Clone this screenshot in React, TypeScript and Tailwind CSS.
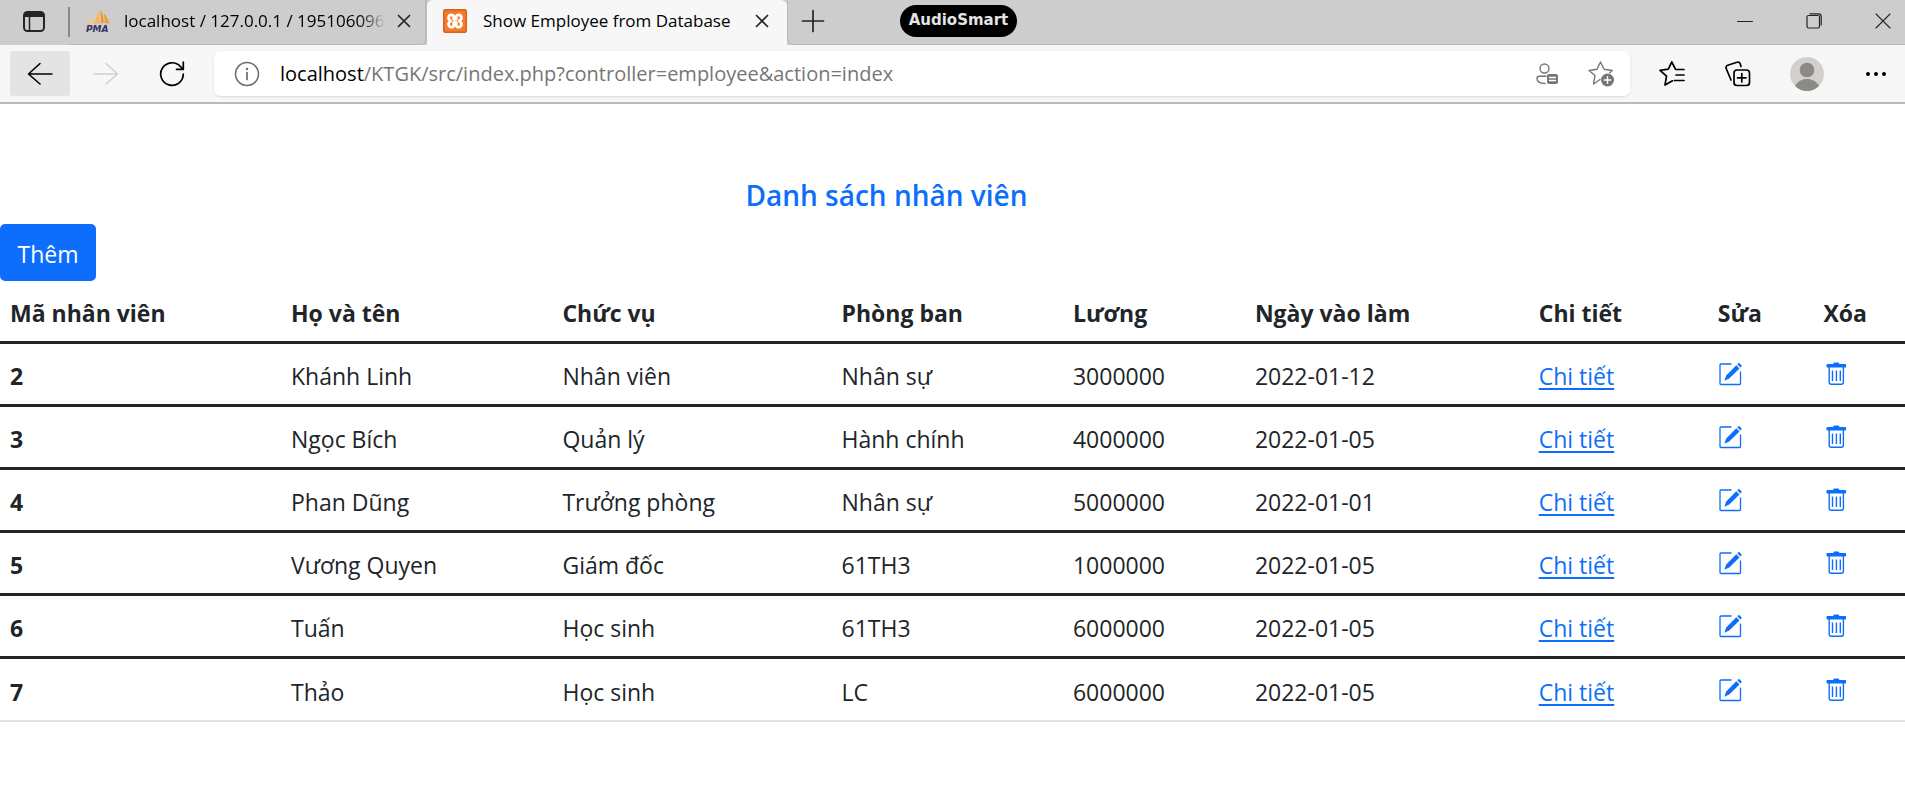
import type { ReactNode } from "react";

type Employee = {
  id: number;
  name: string;
  role: string;
  department: string;
  salary: number;
  startDate: string;
};

const employees: Employee[] = [
  { id: 2, name: "Khánh Linh", role: "Nhân viên", department: "Nhân sự", salary: 3000000, startDate: "2022-01-12" },
  { id: 3, name: "Ngọc Bích", role: "Quản lý", department: "Hành chính", salary: 4000000, startDate: "2022-01-05" },
  { id: 4, name: "Phan Dũng", role: "Trưởng phòng", department: "Nhân sự", salary: 5000000, startDate: "2022-01-01" },
  { id: 5, name: "Vương Quyen", role: "Giám đốc", department: "61TH3", salary: 1000000, startDate: "2022-01-05" },
  { id: 6, name: "Tuấn", role: "Học sinh", department: "61TH3", salary: 6000000, startDate: "2022-01-05" },
  { id: 7, name: "Thảo", role: "Học sinh", department: "LC", salary: 6000000, startDate: "2022-01-05" },
];

const columns = [
  { label: "Mã nhân viên", width: "w-[14.75%]" },
  { label: "Họ và tên", width: "w-[14.25%]" },
  { label: "Chức vụ", width: "w-[14.65%]" },
  { label: "Phòng ban", width: "w-[12.15%]" },
  { label: "Lương", width: "w-[9.55%]" },
  { label: "Ngày vào làm", width: "w-[14.9%]" },
  { label: "Chi tiết", width: "w-[9.4%]" },
  { label: "Sửa", width: "w-[5.55%]" },
  { label: "Xóa", width: "w-[4.8%]" },
];

function Icon({ size = 24, className = "", children }: { size?: number; className?: string; children: ReactNode }) {
  return (
    <svg
      width={size}
      height={size}
      viewBox={`0 0 ${size} ${size}`}
      fill="none"
      stroke="currentColor"
      strokeWidth="1.4"
      strokeLinecap="round"
      strokeLinejoin="round"
      className={`block shrink-0 ${className}`}
      aria-hidden="true"
    >
      {children}
    </svg>
  );
}

function CloseIcon() {
  return (
    <Icon size={14}>
      <path d="M1.5 1.5l11 11M12.5 1.5l-11 11" strokeWidth="1.7" />
    </Icon>
  );
}

function PhpMyAdminIcon() {
  return (
    <svg width="24" height="24" viewBox="0 0 24 24" className="block shrink-0" aria-hidden="true">
      <path d="M6.500 4C6 8 4 12 .8 15.500c2.500-.8 4.200-.9 6.500-.5z" fill="#f9c58a" />
      <path d="M13.500 0C13 2 9.500 10 7.800 15c2-.8 3.700-1 5.700-.8z" fill="#f8b566" />
      <path d="M14 0c1 4 1.200 9 .7 14.200 1-.3 2-.4 3-.3C17.500 8 16.500 4 14 0z" fill="#f7941e" />
      <path d="M17.500 4c3 3 5 6.500 5.800 10.500-1.500-.5-3-.7-4.600-.6 0-3.500-.2-6.500-1.200-9.900z" fill="#f79b2e" />
      <text x="0" y="23" fontSize="9" fontWeight="700" fontStyle="italic" fill="#333366" fontFamily="DejaVu Sans, sans-serif">
        PMA
      </text>
    </svg>
  );
}

function XamppIcon() {
  return (
    <svg width="24" height="24" viewBox="0 0 24 24" className="block shrink-0" aria-hidden="true">
      <rect width="24" height="24" rx="2.500" fill="#d9621e" />
      <rect x="1.500" y="1.500" width="21" height="21" rx="1.500" fill="#f47b2a" />
      <path
        d="M8.300 5.800a2.900 2.900 0 0 0-1.600 5.200l1 1-1 1a2.900 2.900 0 0 0 1.600 5.200c1.500 0 2.400-1 2.400-2.300v-2.400h2.600v2.400c0 1.300.9 2.300 2.400 2.300a2.900 2.900 0 0 0 1.600-5.200l-1-1 1-1a2.900 2.900 0 0 0-1.600-5.200c-1.500 0-2.400 1-2.400 2.300v2.200h-2.600V8.100c0-1.300-.9-2.300-2.400-2.300z"
        fill="#f47b2a"
        stroke="#fff"
        strokeWidth="2.800"
        strokeLinejoin="round"
      />
    </svg>
  );
}

function EditIcon() {
  return (
    <svg width="24" height="24" viewBox="0 0 24 24" className="block" aria-hidden="true">
      <path
        d="M13.500 2H3a1 1 0 0 0-1 1v18.500a1 1 0 0 0 1 1h18.500a1 1 0 0 0 1-1V9.500"
        fill="none"
        stroke="currentColor"
        strokeWidth="1.300"
      />
      <path d="M18.300 3.300l3.200 3.100L11.200 16.600 6.300 18.700l1.900-5.200zM19.300 2.300l1.600-1.500 3 3-1.500 1.600z" fill="currentColor" />
    </svg>
  );
}

function TrashIcon() {
  return (
    <svg width="24" height="24" viewBox="0 0 24 24" className="block" aria-hidden="true">
      <path d="M3.500 2h5.700c.2-1 .8-1.500 1.600-1.500h3c.8 0 1.400.5 1.600 1.500h5.700a1 1 0 0 1 1 1v1.500a1 1 0 0 1-1 1h-17.600a1 1 0 0 1-1-1V3a1 1 0 0 1 1-1z" fill="currentColor" />
      <path d="M5.200 5v15.300a2 2 0 0 0 2 2h10.200a2 2 0 0 0 2-2V5" fill="none" stroke="currentColor" strokeWidth="1.400" />
      <path d="M8.500 8.500v10.500M12.400 8.500v10.500M16.300 8.500v10.500" stroke="currentColor" strokeWidth="1.400" />
    </svg>
  );
}

function TabBar() {
  return (
    <header className="flex h-[45px] items-stretch bg-[#cdcdcd]">
      <button type="button" aria-label="Tab actions" className="ml-[22px] flex items-center pb-[2px]">
        <Icon>
          <rect x="2" y="2" width="20" height="19" rx="3.500" strokeWidth="2" />
          <path d="M2 5.500A3.500 3.500 0 0 1 5.500 2h13A3.500 3.500 0 0 1 22 5.500V7H2z" fill="currentColor" stroke="none" />
          <path d="M7.500 7v14" strokeWidth="1.500" strokeLinecap="butt" />
        </Icon>
      </button>
      <span className="mt-[7px] ml-[22px] h-[30px] w-[2px] bg-[#8a8a8a]" />
      <div className="flex w-[357px] items-center rounded-br-md border-r-2 border-b border-[#bababa] pb-[3px] pl-4">
        <PhpMyAdminIcon />
        <span className="ml-[14px] flex-1 bg-gradient-to-r from-black from-88% to-[#cdcdcd] bg-clip-text text-[17px] whitespace-nowrap text-transparent">
          localhost / 127.0.0.1 / 195106096
        </span>
        <button type="button" aria-label="Close tab" className="mr-4 ml-3">
          <CloseIcon />
        </button>
      </div>
      <div className="flex w-[360px] items-center rounded-t-md bg-[#f7f7f7] pb-[3px] pl-4">
        <XamppIcon />
        <span className="ml-4 flex-1 text-[17px] whitespace-nowrap text-black">Show Employee from Database</span>
        <button type="button" aria-label="Close tab" className="mr-[18px]">
          <CloseIcon />
        </button>
      </div>
      <div className="flex flex-1 items-center rounded-bl-md border-b border-l border-[#bababa] pb-[3px]">
        <button type="button" aria-label="New tab" className="ml-[13px]">
          <Icon>
            <path d="M12 1.500v21M1.500 12h21" strokeWidth="1.700" />
          </Icon>
        </button>
        <span className="ml-[75px] flex h-8 w-[117px] items-center justify-center rounded-full bg-black font-['DejaVu_Sans'] text-[15px] leading-none font-bold text-[#e4e4e4]">
          AudioSmart
        </span>
        <div className="ml-auto flex items-center gap-[53px] pr-[14px]">
          <button type="button" aria-label="Minimize">
            <Icon size={16}>
              <path d="M.5 8.500h15" strokeWidth="1" />
            </Icon>
          </button>
          <button type="button" aria-label="Restore">
            <Icon size={16}>
              <rect x="1" y="2.500" width="12.500" height="12.500" rx="1.500" strokeWidth="1.200" />
              <path d="M4 .8h8.500a2.700 2.700 0 0 1 2.700 2.700V12" strokeWidth="1.200" />
            </Icon>
          </button>
          <button type="button" aria-label="Close window">
            <Icon size={16}>
              <path d="M1 1l14 14M15 1L1 15" strokeWidth="1.100" />
            </Icon>
          </button>
        </div>
      </div>
    </header>
  );
}

function Toolbar() {
  return (
    <nav className="flex h-[59px] items-center border-b-2 border-[#bbbbbb] bg-[#f7f7f7] pl-[10px] text-black">
      <button type="button" aria-label="Back" className="flex h-[45px] w-[60px] items-center justify-center rounded-[3px] bg-[#e4e4e4]">
        <Icon size={26}>
          <path d="M25 13H1.500M13 2.500L1.500 13 13 23" strokeWidth="1.600" />
        </Icon>
      </button>
      <button type="button" aria-label="Forward" disabled className="ml-[23px] text-[#cfcfcf]">
        <Icon size={26}>
          <path d="M1 13h23.500M13 2.500L24.500 13 13 23" />
        </Icon>
      </button>
      <button type="button" aria-label="Refresh" className="ml-10">
        <Icon size={26}>
          <path d="M24.300 13A11.300 11.300 0 1 1 21.500 5.600L24 8M24.300 1v7.300H17.500" strokeWidth="1.700" />
        </Icon>
      </button>
      <div className="ml-[29px] flex h-[45px] flex-1 items-center rounded-md bg-white pr-4 pl-5 shadow-sm">
        <button type="button" aria-label="Site information" className="text-[#6b6b6b]">
          <Icon size={26}>
            <circle cx="13" cy="13" r="11.500" strokeWidth="1.500" />
            <path d="M13 11.500v7" strokeWidth="1.700" />
            <circle cx="13" cy="8" r="1.200" fill="currentColor" stroke="none" />
          </Icon>
        </button>
        <a href="#" className="ml-5 flex-1 text-[20px] whitespace-nowrap text-[#767676]">
          <span className="text-black">localhost</span>/KTGK/src/index.php?controller=employee&amp;action=index
        </a>
        <div className="flex items-center gap-[27px] text-[#767676]">
          <button type="button" aria-label="Saved passwords">
            <Icon size={26}>
              <circle cx="9.500" cy="7.500" r="4.500" />
              <path d="M10 22.500C5 22.500 2 20.500 2 17.500c0-1.500.8-2.200 2.300-2.200H11" />
              <rect x="12" y="13" width="11" height="10" rx="2" fill="currentColor" stroke="none" />
              <path d="M14.500 16.500h6M14.500 19.500h6" stroke="#fff" />
            </Icon>
          </button>
          <button type="button" aria-label="Add to favorites">
            <Icon size={26}>
              <path d="M12 18.500L5.500 23l1.500-8.500L1 9.500l8-1.200L12.500 1 16 8.300l8.300 1.200-2.500 2.300" />
              <circle cx="19.500" cy="19" r="6.500" fill="currentColor" stroke="none" />
              <path d="M19.500 15.800v6.400M16.300 19h6.400" stroke="#fff" />
            </Icon>
          </button>
        </div>
      </div>
      <div className="ml-[29px] flex items-center pr-[19px]">
        <button type="button" aria-label="Favorites">
          <Icon size={26}>
            <path d="M13.500 19.800L6 24l1.500-8.800L1 9.300l8.300-1.200L12.800 1l3.500 6.900M17 8.500h8M17 14h8M15.500 19.500H25" strokeWidth="1.700" />
          </Icon>
        </button>
        <button type="button" aria-label="Collections" className="ml-10">
          <Icon size={26}>
            <rect x="9" y="9" width="15.500" height="15.500" rx="3" strokeWidth="1.700" />
            <path d="M16.800 12.500v8.500M12.500 16.800H21M6 19L1.200 7.500A2.500 2.500 0 0 1 2.700 4.200L12 1.300a2.500 2.500 0 0 1 3.200 1.500L16 5.500" strokeWidth="1.700" />
          </Icon>
        </button>
        <button type="button" aria-label="Profile" className="ml-[39px]">
          <svg width="34" height="34" viewBox="0 0 34 34" className="block" aria-hidden="true">
            <circle cx="17" cy="17" r="17" fill="#d2d0ce" />
            <circle cx="17" cy="13" r="7.300" fill="#8d8985" />
            <path d="M5 29C7.500 24.500 12 22 17 22s9.500 2.500 12 7a17 17 0 0 1-24 0z" fill="#8d8985" />
          </svg>
        </button>
        <button type="button" aria-label="Settings and more" className="ml-[42px]">
          <svg width="20" height="20" viewBox="0 0 20 20" fill="currentColor" className="block" aria-hidden="true">
            <circle cx="2" cy="10" r="2" />
            <circle cx="10" cy="10" r="2" />
            <circle cx="18" cy="10" r="2" />
          </svg>
        </button>
      </div>
    </nav>
  );
}

function EmployeeTable() {
  return (
    <table className="w-full table-fixed border-separate border-spacing-0 text-left text-[23px] leading-9">
      <thead>
        <tr>
          {columns.map((column) => (
            <th
              key={column.label}
              scope="col"
              className={`h-[63px] border-b-[3px] border-[#212529] px-[10px] pt-1 font-bold whitespace-nowrap ${column.width}`}
            >
              {column.label}
            </th>
          ))}
        </tr>
      </thead>
      <tbody>
        {employees.map((employee) => (
          <tr
            key={employee.id}
            className="*:h-[63px] *:border-b-[3px] *:border-[#212529] *:px-[10px] *:pt-1 last:*:border-b-2 last:*:border-[#dee2e6]"
          >
            <th scope="row" className="font-bold">{employee.id}</th>
            <td>{employee.name}</td>
            <td>{employee.role}</td>
            <td>{employee.department}</td>
            <td>{employee.salary}</td>
            <td>{employee.startDate}</td>
            <td>
              <a href="#" className="text-[#0d6efd] underline decoration-2 underline-offset-3">Chi tiết</a>
            </td>
            <td>
              <a href="#" aria-label="Sửa" className="flex w-6 pb-1 text-[#0d6efd]">
                <EditIcon />
              </a>
            </td>
            <td>
              <a href="#" aria-label="Xóa" className="flex w-6 pb-1 text-[#0d6efd]">
                <TrashIcon />
              </a>
            </td>
          </tr>
        ))}
      </tbody>
    </table>
  );
}

export default function App() {
  return (
    <div className="min-h-screen bg-white font-['Open_Sans','Noto_Sans',sans-serif] text-[#212529]">
      <TabBar />
      <Toolbar />
      <main className="pt-[73px]">
        <h1 className="mb-[11px] pr-33 text-center text-[28px] leading-9 font-semibold text-[#0d6efd]">Danh sách nhân viên</h1>
        <a href="#" className="flex h-[57px] w-24 items-center justify-center rounded-[5px] bg-[#0d6efd] pt-1 text-[23px] text-white">
          Thêm
        </a>
        <EmployeeTable />
      </main>
    </div>
  );
}
